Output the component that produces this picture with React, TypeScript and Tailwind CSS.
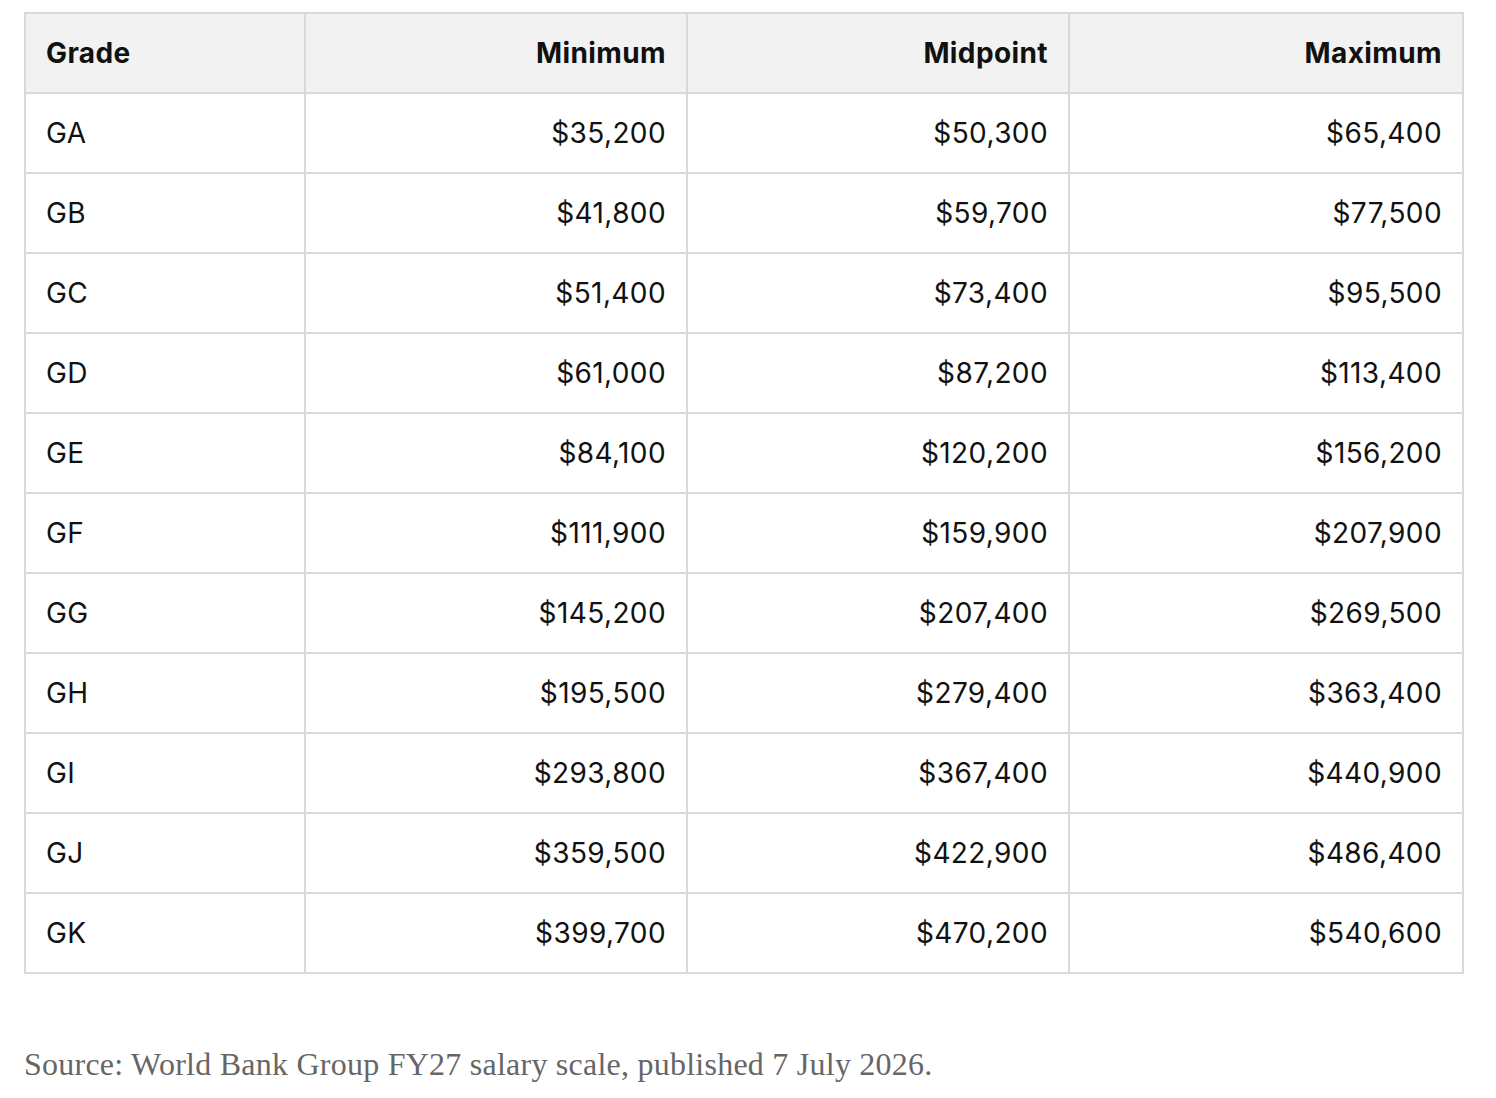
const rows: [string, string, string, string][] = [
  ["GA", "$35,200", "$50,300", "$65,400"],
  ["GB", "$41,800", "$59,700", "$77,500"],
  ["GC", "$51,400", "$73,400", "$95,500"],
  ["GD", "$61,000", "$87,200", "$113,400"],
  ["GE", "$84,100", "$120,200", "$156,200"],
  ["GF", "$111,900", "$159,900", "$207,900"],
  ["GG", "$145,200", "$207,400", "$269,500"],
  ["GH", "$195,500", "$279,400", "$363,400"],
  ["GI", "$293,800", "$367,400", "$440,900"],
  ["GJ", "$359,500", "$422,900", "$486,400"],
  ["GK", "$399,700", "$470,200", "$540,600"],
];

const App = () => {
  return (
    <div className="bg-white min-h-screen pl-6 pt-3 pr-8">
      <table className="w-[1440px] border-collapse border-2 border-[#d9d9d9] font-['Inter',sans-serif] text-[28px] tracking-[0.4px] text-[#111]">
        <thead>
          <tr className="bg-[#f2f2f2] h-20">
            <th className="w-[280px] border-2 border-[#d9d9d9] px-5 text-left font-bold">Grade</th>
            <th className="w-[382px] border-2 border-[#d9d9d9] px-5 text-right font-bold">Minimum</th>
            <th className="w-[382px] border-2 border-[#d9d9d9] px-5 text-right font-bold">Midpoint</th>
            <th className="border-2 border-[#d9d9d9] px-5 text-right font-bold">Maximum</th>
          </tr>
        </thead>
        <tbody>
          {rows.map(r => (
            <tr key={r[0]} className="h-20">
              <td className="border-2 border-[#d9d9d9] px-5 text-left">{r[0]}</td>
              <td className="border-2 border-[#d9d9d9] px-5 text-right">{r[1]}</td>
              <td className="border-2 border-[#d9d9d9] px-5 text-right">{r[2]}</td>
              <td className="border-2 border-[#d9d9d9] px-5 text-right">{r[3]}</td>
            </tr>
          ))}
        </tbody>
      </table>
      <p className="mt-[66px] font-['Liberation_Serif',serif] text-[32px] tracking-[0.24px] text-[#666]">
        Source: World Bank Group FY27 salary scale, published 7 July 2026.
      </p>
    </div>
  );
};

export default App;
